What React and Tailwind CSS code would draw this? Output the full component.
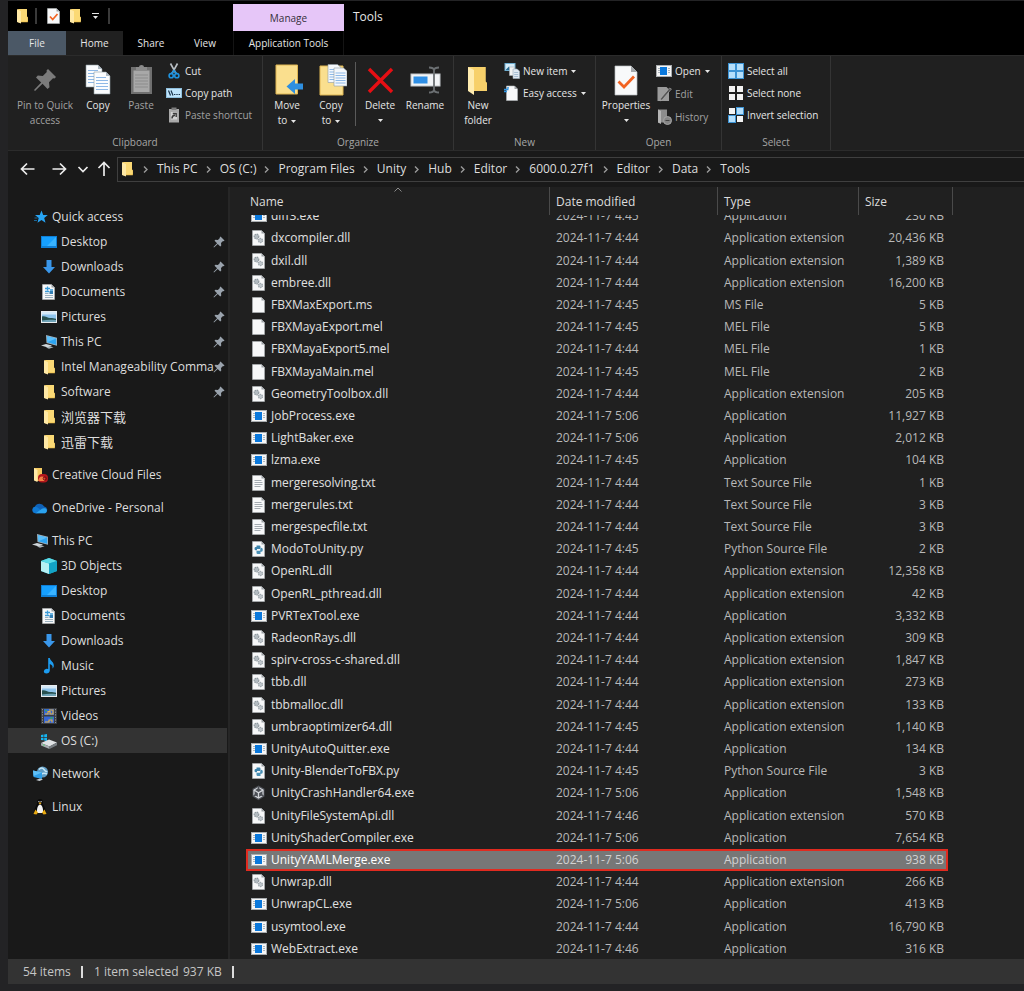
import { useLayoutEffect, useRef } from 'react';

/* ---------- small icons (16px) ---------- */

const Folder = ({ className = 'size-4' }) => (
  <svg className={className} viewBox="0 0 16 16">
    <path d="M4 1h9v7.5l.8.5v5.2H4z" fill="#f0c14b" />
    <path d="M5 1h8v8l.8.4v4.2H6z" fill="#fbd975" />
    <path d="M3 1l4 2.200v12.300L3 14z" fill="#ffe9a6" />
  </svg>
);

const Exe = () => (
  <svg className="size-4" viewBox="0 0 16 16">
    <rect x=".5" y="2.5" width="15" height="11" fill="#f6f6f6" stroke="#a9adb0" />
    <path d="M2 5.5h2M2 7.5h2M2 9.5h2M12 5.5h2M12 7.5h2M12 9.5h2" stroke="#aab4bc" />
    <rect x="4" y="4" width="7" height="8" fill="#0a78dc" />
  </svg>
);

const Page = ({ children }) => (
  <svg className="size-4" viewBox="0 0 16 16">
    <path d="M1.500.5h9l3 3v12h-12z" fill="#f7f8f9" stroke="#b4b8bb" strokeWidth=".6" />
    <path d="M10.500.5v3h3z" fill="#9b9fa3" />
    {children}
  </svg>
);

const Dll = () => (
  <Page>
    <circle cx="5.500" cy="6.500" r="2.300" fill="#b3bbc1" stroke="#8f999f" strokeWidth="1.200" strokeDasharray="1.400 .6" />
    <circle cx="9.500" cy="10.500" r="2.100" fill="#c0c7cc" stroke="#9ea7ad" strokeWidth="1.200" strokeDasharray="1.400 .6" />
  </Page>
);

const Txt = () => (
  <Page>
    <path d="M3.500 5.500h7M3.500 7.500h8M3.500 9.500h8M3.500 11.500h6" stroke="#9aa2a8" strokeWidth=".9" />
  </Page>
);

const Py = () => (
  <Page>
    <path d="M5.500 4.500h2.800q1.200 0 1.200 1.200v2.300H6v1.200H4.500q-1-.5-1-1.500 0-1.600 1-1.600h1z" fill="#3d83ab" />
    <path d="M9.500 13H6.700q-1.200 0-1.200-1.200V9.700h3.700V8.500l1-1.800q1.600.1 1.600 2t-1.300 2h-1z" fill="#4a90b5" />
  </Page>
);

const UnityCube = () => (
  <svg className="size-4" viewBox="0 0 16 16">
    <path d="M7.500.5l6 3.300v7.800l-6 3.600-6-3.600V3.800z" fill="#4c4f55" />
    <path d="M7.500 2.500L12 5.100v5.200L7.500 13 3 10.300V5.100z" fill="#4c4f55" stroke="#d3d6da" strokeWidth="1.200" />
    <path d="M3 5.100l4.500 2.700L12 5.100M7.500 7.800V13" stroke="#d3d6da" strokeWidth="1.300" fill="none" />
    <path d="M7.500 1.500v3M2.500 11L5 9.600M12.500 11L10 9.600" stroke="#4c4f55" strokeWidth="1.600" />
  </svg>
);

const Star = () => (
  <svg className="size-4" viewBox="0 0 16 16">
    <path d="M9.500 1.500l1.700 4.400 4.600.2-3.600 2.900 1.300 4.700-4-2.600-4 2.600L6.700 9 3 6.100l4.700-.2z" fill="#27a5f5" />
    <path d="M2.500 9h3M2 11.500h3" stroke="#1b78b8" strokeWidth=".8" />
  </svg>
);

const Desktop = () => (
  <svg className="size-4" viewBox="0 0 16 16">
    <rect x="0" y="2" width="16" height="12" fill="#0f7fd6" />
    <path d="M1 3h14v9H1z" fill="#16a0ff" />
    <path d="M15 3v9H6z" fill="#39b3ff" />
  </svg>
);

const Download = () => (
  <svg className="size-4" viewBox="0 0 16 16">
    <path d="M5.500 1h5v7H14l-6 6.500L2 8h3.500z" fill="#3a97ea" />
  </svg>
);

const Documents = () => (
  <Page>
    <path d="M4 4.500h5M6.500 2.500v4M4 7.500h4M9 6h3" stroke="#3b9bd8" strokeWidth="1.300" />
    <rect x="8.500" y="7" width="3.500" height="3" fill="#3480b4" />
    <path d="M4 9.500h3.500M4 11.500h8M4 13.500h8" stroke="#9ab0be" />
  </Page>
);

const Pictures = () => (
  <svg className="size-4" viewBox="0 0 16 16">
    <rect x=".5" y="2.500" width="15" height="11" fill="#8fc4ec" stroke="#e8ecef" />
    <path d="M1 3h14v2.500H1z" fill="#d4e9f8" />
    <path d="M1 7.500c3-1 5 1.500 8 1.500s4 .5 6 .8V13H1z" fill="#27504f" />
    <path d="M1 11.500c5-1 9-1 14-.5V13H1z" fill="#6fa3b7" />
  </svg>
);

const ThisPC = () => (
  <svg className="size-4" viewBox="0 0 16 16">
    <path d="M5 1l11 2.800v8L5.500 9z" fill="#9fb3c0" />
    <path d="M6 2.200l9.200 2.400v6.200L6.300 8.300z" fill="#2ca4f2" />
    <path d="M6 2.200l9.200 2.400L6.300 8.300z" fill="#5dc0fa" />
    <path d="M0 11.500l5-1.500 6 1.500-4 2z" fill="#cfd6da" />
    <path d="M5 13.500l4-1.300 3.500 1-4.500 1.500z" fill="#aab4ba" />
  </svg>
);

const CreativeCloud = () => (
  <svg className="size-4" viewBox="0 0 16 16">
    <path d="M2 1h8v13H3z" fill="#f5cb62" />
    <path d="M2 1l3.500 2v12L2 13.500z" fill="#ffe9a6" />
    <rect x="6" y="7" width="10" height="8.500" rx="4" fill="#b3161b" />
    <path d="M6.500 14q0-4.500 3.500-4.500t2.500 4.500z" fill="#f58045" />
    <circle cx="12.800" cy="11.500" r="1.600" fill="none" stroke="#6f0d10" />
  </svg>
);

const OneDrive = () => (
  <svg className="h-4 w-[17px]" viewBox="0 0 17 16">
    <path d="M3.500 13.500a3.400 3.400 0 0 1-.5-6.700A5.600 5.600 0 0 1 13 6.400a3.700 3.700 0 0 1 .8 7.100z" fill="#0f62b8" />
    <path d="M3.500 13.500a3.400 3.400 0 0 1 0-6.700c1.400 0 2 .6 3.500 1.500l6 4.700z" fill="#1079d3" />
    <path d="M4 13.500l6.500-4.700q1.500-1 3.300-.5a2.700 2.700 0 0 1 .2 5.200z" fill="#2ba3ee" />
  </svg>
);

const Objects3D = () => (
  <svg className="size-4" viewBox="0 0 16 16">
    <path d="M8 0l8 3v10l-8 3-8-3V3z" fill="#1fb5cf" />
    <path d="M0 3l8 2.500V16l-8-3z" fill="#b5f0f4" />
    <path d="M0 3l8-3 8 3-8 2.500z" fill="#5cdbe8" />
    <path d="M8 5.500L16 3v10l-8 3z" fill="#13a3c6" />
  </svg>
);

const Music = () => (
  <svg className="size-4" viewBox="0 0 16 16">
    <path d="M7.200 0h1.600c.3 3 4.700 4 4 8.500-.3 1-.9 1.600-1.300 1.900.6-2.400-.7-3.700-2.700-4.400v6.500q-.3 3-3.500 3-2.500 0-2.500-2t2.600-2.700q1 0 1.800.3z" fill="#1c9cf0" />
  </svg>
);

const Videos = () => (
  <svg className="size-4" viewBox="0 0 16 16">
    <path d="M0 0h16v16H0z" fill="#3b3d40" />
    <path d="M3 1h10v6H3zM3 8.500h10V15H3z" fill="#3667d6" />
    <path d="M4 6h3V3.500h2V6h3V2h-4M4 14h4v-2h3v2.500" stroke="#e8b33c" strokeWidth="1.100" fill="none" />
    <path d="M4 2.500h2M9 10h3" stroke="#38a169" strokeWidth="1.500" />
    <path d="M1.500 1v14M14.500 1v14" stroke="#8c8f92" strokeDasharray="1.300 1.300" />
  </svg>
);

const Drive = () => (
  <svg className="size-4" viewBox="0 0 16 16">
    <path d="M0 2l2.500-.5V4H0zM3.200 1.400L6 .9V4H3.200zM0 4.700h2.500v2.600L0 7zM3.200 4.700H6V8l-2.800-.5z" fill="#16b4f0" />
    <path d="M0 10l8-3.500 8 3-7.500 4z" fill="#dfe2e4" />
    <path d="M0 10l8.500 3.500V16L0 12.500z" fill="#a6abaf" />
    <path d="M16 9.500v2.800L8.500 16v-2.500z" fill="#777d82" />
    <path d="M2 11.700l1.500.6" stroke="#4be06c" />
  </svg>
);

const Network = () => (
  <svg className="size-4" viewBox="0 0 16 16">
    <circle cx="10.500" cy="6" r="5.500" fill="#5f9cc4" />
    <path d="M7 3.500q3-3 5 0t3 1.500M8 9q3-3 7-1" stroke="#c6e6f5" strokeWidth="1.500" fill="none" />
    <path d="M1 4.500l9 2V13l-8.500-2z" fill="#2f9fe8" />
    <path d="M1 4.500l9 2L1.500 10z" fill="#5fc0f7" />
    <path d="M4 14l4-1.500 3 1-3.500 1.500z" fill="#c3cace" />
  </svg>
);

const Tux = () => (
  <svg className="size-4" viewBox="0 0 16 16">
    <path d="M8 0c2.500 0 2.800 2 2.800 4S14 8.500 13.500 13h-11C2 8.500 5.200 6 5.200 4S5.500 0 8 0z" fill="#0a0a0a" />
    <path d="M8 5.500c1.800 0 3.500 4 3 8.500H5c-.5-4.500 1.200-8.500 3-8.500z" fill="#f2f2f2" />
    <path d="M6.500 4L8 3.200 9.500 4 8 5.400z" fill="#f1b11b" />
    <circle cx="6.900" cy="2.600" r=".6" fill="#fff" />
    <circle cx="9.100" cy="2.600" r=".6" fill="#fff" />
    <path d="M3.500 10.500l2.500 3-1.500 2L1.500 15zM12.500 10.500l-2.500 3 1.500 2 3-.5z" fill="#e9aa12" />
  </svg>
);

const Pushpin = ({ className = 'size-3', color = '#9aa3ad' }) => (
  <svg className={className} viewBox="0 0 24 24" fill={color}>
    <path d="M15 1l8 8-1.500 1.500-1.500-.3-4 4 .5 5L14.500 21l-5-5.200L2 23l-1-1 7.200-7.500L3 9.500 4.800 7.500l5 .5 4-4-.3-1.500z" />
  </svg>
);

const Scissors = () => (
  <svg className="size-4" viewBox="0 0 16 16" fill="none">
    <path d="M4.500.5l5.500 10M11.500.5L6 10.500" stroke="#b9bfc4" strokeWidth="1.600" />
    <circle cx="5.200" cy="12.700" r="2.100" stroke="#1f93df" strokeWidth="1.600" />
    <circle cx="10.800" cy="12.700" r="2.100" stroke="#1f93df" strokeWidth="1.600" />
    <path d="M5.500 10.500L8 7.500l2.500 3" stroke="#1f93df" strokeWidth="1.500" />
  </svg>
);

const CopyPath = () => (
  <svg className="size-4" viewBox="0 0 16 16">
    <rect x=".5" y="3.500" width="15" height="9" fill="#bfe4fb" stroke="#8fbfdd" />
    <path d="M2.500 5.500l2 5M5 5.500l2 5" stroke="#17324a" strokeWidth="1.200" />
    <path d="M8 9.500h6" stroke="#17324a" strokeDasharray="1.400 .9" />
  </svg>
);

const PasteShortcut = () => (
  <svg className="size-4" viewBox="0 0 16 16">
    <path d="M3 2h10v13.500H3z" fill="#a9a9a9" />
    <path d="M5.500.5h5v2.500h-5z" fill="#7d7d7d" />
    <path d="M4.800 5h6.400v7.500H4.800z" fill="#d2d2d2" />
    <path d="M6 11.500q0-3 3-3.200M6.800 6.500h3.400V10" stroke="#3c3c3c" strokeWidth="1.400" fill="none" />
  </svg>
);

const NewItem = () => (
  <svg className="size-4" viewBox="0 0 16 16">
    <rect x="1" y=".5" width="10" height="7" fill="#d7edf9" stroke="#6eaed1" />
    <path d="M2 6.500l3-3 2 2V7H2z" fill="#256a92" />
    <path d="M5.500 4h5v8.500h-5z" fill="#f1f3f4" stroke="#a9b3ba" strokeWidth=".6" />
    <path d="M9 6h4l2.500 2v7.500H9z" fill="#dfe9f3" stroke="#9fb0be" strokeWidth=".6" />
    <path d="M10.200 9.500h4M10.200 11.500h4M10.200 13.500h4" stroke="#a6bed3" />
  </svg>
);

const EasyAccess = () => (
  <svg className="size-4" viewBox="0 0 16 16">
    <path d="M2.500 1h8l3 3v11.500h-11z" fill="#f7f8f9" stroke="#b4b8bb" strokeWidth=".6" />
    <path d="M10.500 1v3h3z" fill="#9b9fa3" />
    <path d="M0 4.500h4.500M0 6.500h3M3 2.800h2" stroke="#2e93df" strokeWidth="1.300" />
  </svg>
);

const EditIcon = () => (
  <svg className="size-4" viewBox="0 0 16 16">
    <path d="M1.500 1h9L13 3.500V15H1.500z" fill="#9b9b9b" />
    <path d="M15.500 3l-9 10.500L4 15l.8-2.800L13.500 2z" fill="#555" stroke="#bdbdbd" strokeWidth=".5" />
  </svg>
);

const HistoryIcon = () => (
  <svg className="size-4" viewBox="0 0 16 16">
    <path d="M2 .500h9v13H2z" fill="#8c8c8c" />
    <path d="M2 .500l3 1.500v13l-3-1.500z" fill="#b5b5b5" />
    <circle cx="11.500" cy="11.500" r="4" fill="#858585" stroke="#a5a5a5" />
    <path d="M9.500 11.500h4" stroke="#444" />
  </svg>
);

const SelectGrid = ({ cells }) => (
  <svg className="size-4" viewBox="0 0 16 16">
    {cells.map((on, i) => {
      const x = (i % 2) * 8;
      const y = Math.floor(i / 2) * 8;
      return on ? (
        <rect key={i} x={x + 0.5} y={y + 0.5} width="7" height="7" fill="#b5dffb" stroke="#3c93d4" />
      ) : (
        <rect key={i} x={x + 1} y={y + 1} width="6" height="6" fill="#f3f3f3" />
      );
    })}
  </svg>
);

/* ---------- large ribbon icons (32px) ---------- */

const BigCopy = () => (
  <svg className="size-8" viewBox="0 0 32 32">
    {[[4, 1], [12, 8]].map(([x, y]) => (
      <g key={x} transform={`translate(${x} ${y})`}>
        <path d="M0 0h12l4 4v18H0z" fill="#fafcfe" stroke="#8f9aa3" strokeWidth=".6" />
        <path d="M12 0v4h4z" fill="#aeb9c2" />
        <path d="M2 5.500h10M2 8.500h12M2 11.500h12M2 14.500h12M2 17.500h12" stroke="#8db8e6" />
      </g>
    ))}
  </svg>
);

const BigPaste = () => (
  <svg className="size-8" viewBox="0 0 32 32">
    <rect x="6" y="3" width="21" height="27" fill="#707070" />
    <rect x="8.500" y="6.500" width="16" height="21.500" fill="#a8a8a8" />
    <path d="M10 11h13M10 14h13M10 17h13M10 20h13M10 23h13" stroke="#8c8c8c" />
    <path d="M11 3h3q0-2 2.500-2T19 3h3v4H11z" fill="#8b8b8b" />
  </svg>
);

const BigMove = () => (
  <svg className="size-8" viewBox="0 0 32 32">
    <path d="M5 1h21.500v29H5z" fill="#fadf8e" stroke="#dfb653" />
    <path d="M15.500 22.500L24 15v4.500h8v6h-8V30z" fill="#2e8fe0" />
  </svg>
);

const BigCopyTo = () => (
  <svg className="size-8" viewBox="0 0 32 32">
    <path d="M5 2h23v29H5z" fill="#fadf8e" stroke="#dfb653" />
    {[[13, 0.5], [19, 4]].map(([x, y]) => (
      <g key={x} transform={`translate(${x} ${y})`}>
        <path d="M0 0h9.500l3.500 3v15H0z" fill="#f4f8fc" stroke="#8f9aa3" strokeWidth=".6" />
        <path d="M1.500 5h10M1.500 7.500h10M1.500 10h10M1.500 12.500h10M1.500 15h10" stroke="#8db8e6" />
      </g>
    ))}
  </svg>
);

const BigDelete = () => (
  <svg className="size-8" viewBox="0 0 32 32">
    <path d="M5 5l23 23M28 5L5 28" stroke="#e60f14" strokeWidth="3.400" />
  </svg>
);

const BigRename = () => (
  <svg className="size-8" viewBox="0 0 32 32">
    <rect x="2" y="10" width="29" height="12" fill="#f2f4f6" stroke="#c4c8cb" />
    <rect x="4.500" y="12.500" width="14" height="7" fill="#2f8fe6" />
    <path d="M20 3.500q4.500 0 5 2.500.5-2.500 5-2.500M25 6v20M20 28.500q4.500 0 5-2.500.5 2.500 5 2.500" stroke="#6b6f72" strokeWidth="1.800" fill="none" />
  </svg>
);

const BigNewFolder = () => (
  <svg className="size-8" viewBox="0 0 32 32">
    <path d="M6 3h17.500v14.500L25 19v8H8z" fill="#f9d572" />
    <path d="M11 3h12.500v14.500L25 19v8H13z" fill="#f7d06a" />
    <path d="M6 3l6 3v25l-6-4z" fill="#ffecb0" />
  </svg>
);

const BigProperties = () => (
  <svg className="size-8" viewBox="0 0 32 32">
    <path d="M5 2h16l6 6v23H5z" fill="#f8f9fa" stroke="#b9bdc0" strokeWidth=".7" />
    <path d="M21 2v6h6z" fill="#a4a8ab" />
    <path d="M8.500 17.500l5.500 5.500L24 12.500" stroke="#f26322" strokeWidth="2.800" fill="none" />
  </svg>
);

const CheckedPage = () => (
  <Page>
    <path d="M4 8.500l2.700 3L11.500 6" stroke="#f26322" strokeWidth="1.700" fill="none" />
  </Page>
);

const Caret = () => (
  <svg className="inline-block w-[5px] h-[3px]" viewBox="0 0 5 3">
    <path d="M0 0h5L2.500 3z" fill="#e6e6e6" />
  </svg>
);

/* ---------- data ---------- */

const ICONS = { exe: Exe, dll: Dll, txt: Txt, py: Py, file: Page, unity: UnityCube };

const APP = 'Application';
const EXT = 'Application extension';

const FILES = [
  ['exe', 'diff3.exe', '4:45', APP, '230'],
  ['dll', 'dxcompiler.dll', '4:44', EXT, '20,436'],
  ['dll', 'dxil.dll', '4:44', EXT, '1,389'],
  ['dll', 'embree.dll', '4:44', EXT, '16,200'],
  ['file', 'FBXMaxExport.ms', '4:45', 'MS File', '5'],
  ['file', 'FBXMayaExport.mel', '4:45', 'MEL File', '5'],
  ['file', 'FBXMayaExport5.mel', '4:44', 'MEL File', '1'],
  ['file', 'FBXMayaMain.mel', '4:45', 'MEL File', '2'],
  ['dll', 'GeometryToolbox.dll', '4:44', EXT, '205'],
  ['exe', 'JobProcess.exe', '5:06', APP, '11,927'],
  ['exe', 'LightBaker.exe', '5:06', APP, '2,012'],
  ['exe', 'lzma.exe', '4:45', APP, '104'],
  ['txt', 'mergeresolving.txt', '4:44', 'Text Source File', '1'],
  ['txt', 'mergerules.txt', '4:44', 'Text Source File', '3'],
  ['txt', 'mergespecfile.txt', '4:44', 'Text Source File', '3'],
  ['py', 'ModoToUnity.py', '4:45', 'Python Source File', '2'],
  ['dll', 'OpenRL.dll', '4:44', EXT, '12,358'],
  ['dll', 'OpenRL_pthread.dll', '4:44', EXT, '42'],
  ['exe', 'PVRTexTool.exe', '4:44', APP, '3,332'],
  ['dll', 'RadeonRays.dll', '4:44', EXT, '309'],
  ['dll', 'spirv-cross-c-shared.dll', '4:44', EXT, '1,847'],
  ['dll', 'tbb.dll', '4:44', EXT, '273'],
  ['dll', 'tbbmalloc.dll', '4:44', EXT, '133'],
  ['dll', 'umbraoptimizer64.dll', '4:45', EXT, '1,140'],
  ['exe', 'UnityAutoQuitter.exe', '4:44', APP, '134'],
  ['py', 'Unity-BlenderToFBX.py', '4:45', 'Python Source File', '3'],
  ['unity', 'UnityCrashHandler64.exe', '5:06', APP, '1,548'],
  ['dll', 'UnityFileSystemApi.dll', '4:46', EXT, '570'],
  ['exe', 'UnityShaderCompiler.exe', '5:06', APP, '7,654'],
  ['exe', 'UnityYAMLMerge.exe', '5:06', APP, '938'],
  ['dll', 'Unwrap.dll', '4:44', EXT, '266'],
  ['exe', 'UnwrapCL.exe', '5:06', APP, '413'],
  ['exe', 'usymtool.exe', '4:44', APP, '16,790'],
  ['exe', 'WebExtract.exe', '4:46', APP, '316'],
];

const SELECTED = 'UnityYAMLMerge.exe';

const TREE = [
  {
    Icon: Star,
    name: 'Quick access',
    items: [
      { Icon: Desktop, name: 'Desktop', pinned: true },
      { Icon: Download, name: 'Downloads', pinned: true },
      { Icon: Documents, name: 'Documents', pinned: true },
      { Icon: Pictures, name: 'Pictures', pinned: true },
      { Icon: ThisPC, name: 'This PC', pinned: true },
      { Icon: Folder, name: 'Intel Manageability Comma', pinned: true },
      { Icon: Folder, name: 'Software', pinned: true },
      { Icon: Folder, name: '浏览器下载', cjk: true },
      { Icon: Folder, name: '迅雷下载', cjk: true },
    ],
  },
  { Icon: CreativeCloud, name: 'Creative Cloud Files', items: [] },
  { Icon: OneDrive, name: 'OneDrive - Personal', items: [] },
  {
    Icon: ThisPC,
    name: 'This PC',
    items: [
      { Icon: Objects3D, name: '3D Objects' },
      { Icon: Desktop, name: 'Desktop' },
      { Icon: Documents, name: 'Documents' },
      { Icon: Download, name: 'Downloads' },
      { Icon: Music, name: 'Music' },
      { Icon: Pictures, name: 'Pictures' },
      { Icon: Videos, name: 'Videos' },
      { Icon: Drive, name: 'OS (C:)', active: true },
    ],
  },
  { Icon: Network, name: 'Network', items: [] },
  { Icon: Tux, name: 'Linux', items: [] },
];

const CRUMBS = ['This PC', 'OS (C:)', 'Program Files', 'Unity', 'Hub', 'Editor', '6000.0.27f1', 'Editor', 'Data', 'Tools'];

/* ---------- title bar and tabs ---------- */

function TitleBar() {
  return (
    <header className="flex bg-black">
      <div className="flex w-[225px] shrink-0 flex-col">
        <div className="flex h-[30px] items-center gap-[5px] pl-1.5">
          <Folder />
          <span className="h-4 w-0.5 bg-[#3a3a3a]" />
          <button type="button" aria-label="Properties" className="ml-1"><CheckedPage /></button>
          <button type="button" aria-label="New folder"><Folder /></button>
          <button type="button" aria-label="Customize toolbar" className="ml-1 flex flex-col items-center gap-0.5">
            <span className="h-px w-[7px] bg-[#e6e6e6]" />
            <Caret />
          </button>
          <span className="ml-1 h-4 w-0.5 bg-[#3a3a3a]" />
        </div>
        <nav className="flex h-6 text-[10px] text-[#e6e6e6]">
          <button type="button" className="w-[58px] bg-[#4b5866]">File</button>
          <button type="button" className="w-[57px] bg-[#202020]">Home</button>
          <button type="button" className="w-14">Share</button>
          <button type="button" className="w-[52px]">View</button>
        </nav>
      </div>
      <div className="flex w-[111px] shrink-0 flex-col pt-[3px] text-[10px]">
        <div className="flex h-[27px] items-center justify-center bg-[#e6c6f8] pt-0.5 text-[#35303a]">Manage</div>
        <button type="button" className="h-6 border-x border-[#141414] whitespace-nowrap text-[#e6e6e6]">Application Tools</button>
      </div>
      <h1 className="flex h-[30px] items-center pt-0.5 pl-[9px] text-xs text-[#e6e6e6]">Tools</h1>
    </header>
  );
}

/* ---------- ribbon ---------- */

function BigButton({ icon, width, disabled, lines, caret }) {
  return (
    <button
      type="button"
      className={`flex shrink-0 flex-col items-center pt-2 text-[10px] leading-[15px] ${width} ${disabled ? 'text-[#a2a2a2]' : 'text-[#e6e6e6]'}`}
    >
      <span className="mb-0.5 flex h-8 items-center">{icon}</span>
      {lines.map((line, i) => (
        <span key={line} className="whitespace-nowrap">
          {line}
          {caret === 'inline' && i === lines.length - 1 && <span className="ml-1 inline-flex align-middle"><Caret /></span>}
        </span>
      ))}
      {caret === 'below' && <span className="flex h-[15px] items-center"><Caret /></span>}
    </button>
  );
}

function SmallButton({ icon, label, caret, disabled }) {
  return (
    <button
      type="button"
      className={`flex h-[22px] items-center gap-[3px] text-[10px] whitespace-nowrap ${disabled ? 'text-[#a2a2a2]' : 'text-[#e6e6e6]'}`}
    >
      {icon}
      {label}
      {caret && <span className="ml-px flex"><Caret /></span>}
    </button>
  );
}

function Group({ name, width, children }) {
  return (
    <section className={`flex shrink-0 flex-col border-r border-[#343434] ${width}`}>
      <div className="flex h-[78px]">{children}</div>
      <h2 className="text-center text-[10px] leading-4 text-[#a6a6a6]">{name}</h2>
    </section>
  );
}

function Ribbon() {
  return (
    <div className="flex h-24 border-y border-[#2b2b2b] bg-[#202020]">
      <Group name="Clipboard" width="w-[255px]">
        <span className="w-1" />
        <BigButton width="w-[66px]" disabled icon={<Pushpin className="size-6" color="#7b7b7b" />} lines={['Pin to Quick', 'access']} />
        <BigButton width="w-10" icon={<BigCopy />} lines={['Copy']} />
        <BigButton width="w-[46px]" disabled icon={<BigPaste />} lines={['Paste']} />
        <div className="flex flex-col pt-1 pl-0.5">
          <SmallButton icon={<Scissors />} label="Cut" />
          <SmallButton icon={<CopyPath />} label="Copy path" />
          <SmallButton icon={<PasteShortcut />} label="Paste shortcut" disabled />
        </div>
      </Group>
      <Group name="Organize" width="w-[191px]">
        <span className="w-0.5" />
        <BigButton width="w-11" icon={<BigMove />} lines={['Move', 'to']} caret="inline" />
        <BigButton width="w-11" icon={<BigCopyTo />} lines={['Copy', 'to']} caret="inline" />
        <span className="mx-0.5 mt-1.5 h-16 w-px bg-[#5a5a5a]" />
        <BigButton width="w-11" icon={<BigDelete />} lines={['Delete']} caret="below" />
        <BigButton width="w-[46px]" icon={<BigRename />} lines={['Rename']} />
      </Group>
      <Group name="New" width="w-[142px]">
        <BigButton width="w-12" icon={<BigNewFolder />} lines={['New', 'folder']} />
        <div className="flex flex-col pt-1 pl-0.5">
          <SmallButton icon={<NewItem />} label="New item" caret />
          <SmallButton icon={<EasyAccess />} label="Easy access" caret />
        </div>
      </Group>
      <Group name="Open" width="w-[126px]">
        <BigButton width="w-[60px]" icon={<BigProperties />} lines={['Properties']} caret="below" />
        <div className="flex flex-col gap-px pt-1">
          <SmallButton icon={<Exe />} label="Open" caret />
          <SmallButton icon={<EditIcon />} label="Edit" disabled />
          <SmallButton icon={<HistoryIcon />} label="History" disabled />
        </div>
      </Group>
      <Group name="Select" width="w-[109px]">
        <div className="flex flex-col pt-1 pl-1.5">
          <SmallButton icon={<SelectGrid cells={[1, 1, 1, 1]} />} label="Select all" />
          <SmallButton icon={<SelectGrid cells={[0, 0, 0, 0]} />} label="Select none" />
          <SmallButton icon={<SelectGrid cells={[0, 1, 1, 0]} />} label="Invert selection" />
        </div>
      </Group>
    </div>
  );
}

/* ---------- address bar ---------- */

const NavArrow = ({ label, d, className = 'h-4 w-4' }) => (
  <button type="button" aria-label={label}>
    <svg className={className} viewBox="0 0 16 16" fill="none" stroke="#ececec" strokeWidth="1.700">
      <path d={d} />
    </svg>
  </button>
);

function AddressBar() {
  return (
    <div className="flex h-9 items-center bg-[#191919] pl-3">
      <NavArrow label="Back" d="M14.500 8H1.500M7 2.500L1.500 8 7 13.500" />
      <span className="w-4" />
      <NavArrow label="Forward" d="M.5 8h13M8 2.500L13.500 8 8 13.500" />
      <span className="w-2" />
      <NavArrow label="Recent locations" d="M2.500 6L7 10.500 11.500 6" />
      <span className="w-1" />
      <NavArrow label="Up" d="M8 15V1.500M2.500 7L8 1.500 13.500 7" />
      <div className="ml-[5px] flex h-[25px] min-w-0 flex-1 items-center border border-r-0 border-[#3f3f3f] pl-px text-xs text-[#dedede]">
        <Folder />
        {CRUMBS.map((crumb, i) => (
          <span key={i} className="flex items-center">
            <svg className="mr-[9px] ml-2 h-[7px] w-[5px]" viewBox="0 0 5 7" fill="none" stroke="#9a9a9a" strokeWidth="1.400">
              <path d="M1 .5l3 3-3 3" />
            </svg>
            <a href="#" className="whitespace-nowrap">{crumb}</a>
          </span>
        ))}
      </div>
    </div>
  );
}

/* ---------- navigation tree ---------- */

function TreeRow({ Icon, name, pinned, active, cjk, root }) {
  return (
    <a
      href="#"
      className={`flex h-[25px] items-center pr-0.5 ${root ? 'pl-6' : 'pl-[33px]'} ${active ? 'bg-[#333333]' : ''}`}
    >
      <span className="mr-1 flex w-4 shrink-0"><Icon /></span>
      <span className={`min-w-0 flex-1 whitespace-nowrap ${cjk ? 'text-[13px] leading-5' : ''}`}>{name}</span>
      {pinned && <Pushpin />}
    </a>
  );
}

function Tree() {
  return (
    <nav className="flex w-[222px] shrink-0 flex-col gap-2 border-r-2 border-[#262626] bg-[#191919] pt-[17px] pr-px text-xs text-[#dedede]">
      {TREE.map((section, i) => (
        <div key={i}>
          <TreeRow Icon={section.Icon} name={section.name} root />
          {section.items.map((item) => (
            <TreeRow key={item.name} {...item} />
          ))}
        </div>
      ))}
    </nav>
  );
}

/* ---------- file list ---------- */

const HEAD = 'sticky top-0 z-10 h-7 border-r border-[#4a4a4a] bg-[#202020] pt-px text-left font-normal text-[#dcdcdc]';

function FileRow({ icon, name, time, type, size }) {
  const Icon = ICONS[icon];
  const selected = name === SELECTED;
  const cell = selected ? 'py-0 border-y-2 border-[#e02b20] bg-[#777777] text-[#d2d2d2]' : 'py-0.5 text-[#b9b9b9]';
  return (
    <tr>
      <td className={`${cell} ${selected ? 'border-l-2 pl-[3px]' : 'pl-[5px]'}`}>
        <span className={`flex items-center gap-1 leading-4 ${selected ? 'text-white' : 'text-[#e0e0e0]'}`}>
          <Icon />
          {name}
        </span>
      </td>
      <td className={`pl-1.5 leading-4 ${cell}`}>2024-11-7 {time}</td>
      <td className={`pl-1.5 leading-4 ${cell}`}>{type}</td>
      <td className={`text-right leading-4 ${cell} ${selected ? 'border-r-2 pr-0.5' : 'pr-1'}`}>{size} KB</td>
      <td />
    </tr>
  );
}

function FileList() {
  const ref = useRef(null);

  useLayoutEffect(() => {
    ref.current.scrollTop = 10;
  }, []);

  return (
    <main ref={ref} className="min-w-0 flex-1 overflow-hidden bg-[#202020] pl-4">
      <table className="h-[calc(100%+11px)] w-[707px] table-fixed border-separate border-spacing-0 text-xs whitespace-nowrap">
        <thead>
          <tr className="h-7">
            <th className={`${HEAD} w-[304px] pl-1`}>
              Name
              <svg className="absolute top-0 left-1/2 h-[5px] w-2 -translate-x-1/2" viewBox="0 0 8 5" fill="none" stroke="#8a8a8a">
                <path d="M.5 4.500L4 1l3.500 3.500" />
              </svg>
            </th>
            <th className={`${HEAD} w-[168px] pl-1.5`}>Date modified</th>
            <th className={`${HEAD} w-[141px] pl-1.5`}>Type</th>
            <th className={`${HEAD} w-[89px] border-r-0 pl-1.5`}>Size</th>
            <th className={`${HEAD} w-[5px]`} />
          </tr>
        </thead>
        <tbody>
          {FILES.map(([icon, name, time, type, size]) => (
            <FileRow key={name} icon={icon} name={name} time={time} type={type} size={size} />
          ))}
        </tbody>
      </table>
    </main>
  );
}

function StatusBar() {
  return (
    <footer className="flex h-[25px] shrink-0 items-center bg-[#333333] pl-[15px] text-xs text-[#c6c6c6]">
      <span className="w-[58px]">54 items</span>
      <span className="h-3 w-0.5 bg-[#dcdcdc]" />
      <span className="ml-[11px] w-[89px] whitespace-nowrap">1 item selected</span>
      <span className="w-[49px] whitespace-nowrap">937 KB</span>
      <span className="h-3 w-0.5 bg-[#dcdcdc]" />
    </footer>
  );
}

export default function App() {
  return (
    <div className="h-screen bg-[#232325] pt-px pb-[7px] pl-2 font-['Open_Sans','Noto_Sans_CJK_SC',sans-serif]">
      <div className="flex h-full flex-col">
        <TitleBar />
        <Ribbon />
        <AddressBar />
        <div className="flex min-h-0 flex-1">
          <Tree />
          <FileList />
        </div>
        <StatusBar />
      </div>
    </div>
  );
}
